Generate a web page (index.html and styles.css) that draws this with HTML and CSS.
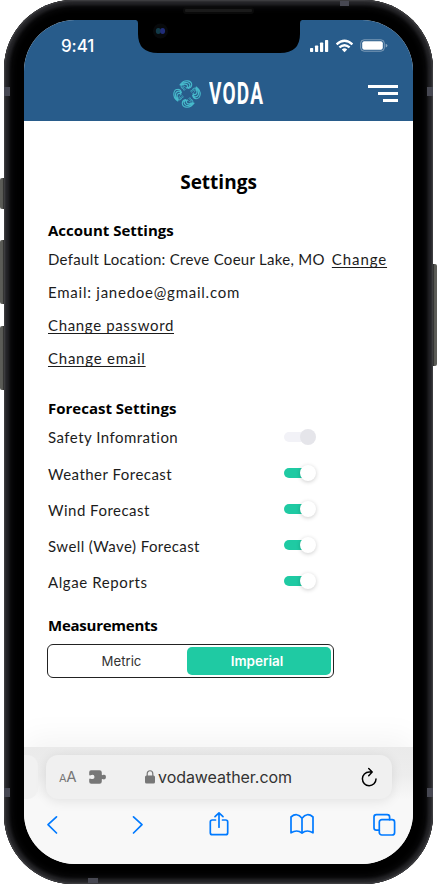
FILE: index.html
```html
<!DOCTYPE html>
<html lang="en">
<head>
<meta charset="utf-8">
<title>Voda Settings</title>
<link rel="stylesheet" href="styles.css">
</head>
<body>
<div class="phone">
  <i class="key key-mute"></i><i class="key key-up"></i><i class="key key-down"></i><i class="key key-power"></i>
  <i class="band band-lt"></i><i class="band band-rt"></i><i class="band band-lb"></i><i class="band band-rb"></i><i class="band band-top"></i><i class="band band-bottom"></i>
  <i class="speaker"></i>
  <div class="screen">
    <svg class="notch" width="166" height="34" viewBox="0 0 166 34"><path d="M0 0Q2 .4 2 3V14Q2 33 22 33H144Q164 33 164 14V3Q164 .4 166 0Z"/><circle cx="24.5" cy="11" r="7.5" fill="#07090b"/><ellipse cx="22.3" cy="11" rx="2.5" ry="3" fill="#123a48"/><ellipse cx="26.6" cy="11" rx="2.5" ry="3" fill="#202c78"/></svg>
    <header class="header">
      <div class="status">
        <span class="time">9:41</span>
        <svg class="signals" width="80" height="14" viewBox="0 0 80 14" fill="#fff">
          <rect x="0" y="9" width="3.2" height="4" rx=".7"/><rect x="5" y="6.5" width="3.2" height="6.5" rx=".7"/><rect x="10" y="3.5" width="3.2" height="9.5" rx=".7"/><rect x="15" y="1" width="3.2" height="12" rx=".7"/>
          <g fill="none" stroke="#fff" stroke-width="2.3"><path d="M26.6 5.3Q34.5-1.9 42.4 5.3M29.4 8.4Q34.5 4 39.6 8.4"/></g><path d="M31.8 10.4Q34.5 8.2 37.2 10.4L34.5 13.2Z"/>
          <rect x="50.7" y=".8" width="23.6" height="11.4" rx="3.4" fill="none" stroke="#fff" stroke-opacity=".4"/><rect x="52.2" y="2.2" width="20.6" height="8.6" rx="2"/><path d="M75.7 4.7Q77.4 5.2 77.4 6.6T75.7 8.5Z" opacity=".45"/>
        </svg>
      </div>
      <div class="brand">
        <svg width="30" height="30" viewBox="-15 -15 30 30" fill="none" stroke="#46b9cb" stroke-width="1.15" stroke-linecap="round">
          <defs><g id="wave"><path d="M-7-9.2Q-3.6-13.9 1-13.1Q4.6-12.4 4.7-9.2M-6.3-8.9Q-3-12.5 1-11.2Q3-10.2 2.9-8M-5.6-8.7Q-2-10.9 0-9.2Q1-8 .3-7M4.7-9.2Q4.5-6.2 1.4-5.6M2.9-8Q1.8-5.8-.6-6.1"/><path d="M-6-7.6Q-3-9-1-6.2M-5.5-6.6Q-3.5-7-2-4.6M-4.8-5.6Q-3.6-5.5-3-3.8" stroke-width="1" stroke-dasharray=".7 1.2"/></g></defs>
          <use href="#wave"/><use href="#wave" transform="rotate(90)"/><use href="#wave" transform="rotate(180)"/><use href="#wave" transform="rotate(270)"/>
        </svg>
        <span class="wordmark">VODA</span>
        <div class="menu"><i></i><i></i><i></i></div>
      </div>
    </header>
    <main class="content">
      <h1>Settings</h1>
      <h2 class="account">Account Settings</h2>
      <div class="line"><span class="location">Default Location: Creve Coeur Lake, MO</span><a class="inline-link">Change</a></div>
      <div class="line"><span>Email: janedoe@gmail.com</span></div>
      <div class="line"><a class="password">Change password</a></div>
      <div class="line"><a>Change email</a></div>
      <h2>Forecast Settings</h2>
      <div class="option first"><span>Safety Infomration</span><i class="switch off"></i></div>
      <div class="option"><span>Weather Forecast</span><i class="switch"></i></div>
      <div class="option"><span>Wind Forecast</span><i class="switch"></i></div>
      <div class="option swell"><span>Swell (Wave) Forecast</span><i class="switch"></i></div>
      <div class="option algae"><span>Algae Reports</span><i class="switch"></i></div>
      <h2 class="measurements">Measurements</h2>
      <div class="segments"><span>Metric</span><span class="selected">Imperial</span></div>
    </main>
    <footer class="browser">
      <div class="tabs"><i class="previous"></i>
        <div class="address">
          <span class="aa"><small>A</small>A</span>
          <svg class="puzzle" width="18" height="14" viewBox="0 0 18 14"><path fill="#777" d="M2 .2H10.5Q12.8.2 12.8 2.5V4.8Q14 5.5 14.2 4.8Q17 4.2 17 7T14.2 9.3Q14 8.6 12.8 9.2V11.5Q12.8 13.8 10.5 13.8H2.3Q.2 13.8.2 11.7V9.2Q.5 8.3 1.5 8.7Q5.5 10 5.5 7T1.5 5.2Q.5 5.7.2 4.8V2.3Q.2.2 2 .2Z"/></svg>
          <svg class="lock" width="10" height="14" viewBox="0 0 10 14"><rect y="5.6" width="10" height="8" rx="1.5" fill="#777"/><path d="M2.2 6V3.8C2.2-.3 7.8-.3 7.8 3.8V6" fill="none" stroke="#777" stroke-width="1.2"/></svg>
          <span class="url">vodaweather.com</span>
          <svg class="reload" width="18" height="20" viewBox="0 0 18 20" fill="none" stroke="#000" stroke-width="1.5" stroke-linecap="round" stroke-linejoin="round"><path d="M12 5.1H9.2A6.8 6.8 0 1 0 16 12M8.7 1.5L12.2 5.1L8.7 8.7"/></svg>
        </div>
      </div>
      <div class="actions">
        <svg width="12" height="26" viewBox="0 0 12 26"><path d="M10.5 4.8L2 12.7L10.5 21"/></svg>
        <svg class="forward" width="12" height="26" viewBox="0 0 12 26"><path d="M1.5 4.8L10 12.7L1.5 21"/></svg>
        <svg class="share" width="20" height="26" viewBox="0 0 20 26"><path d="M6.5 8H3.3Q1.3 8 1.3 10V20.7Q1.3 22.7 3.3 22.7H16.7Q18.7 22.7 18.7 20.7V10Q18.7 8 16.7 8H13.5M10 15.2V1M6 4.6L10 .9L14 4.6"/></svg>
        <svg class="book" width="24" height="26" viewBox="0 0 24 26"><path d="M12 6.2Q7-.1 1 5V20.8Q7.2 17 12 21.2Q16.8 17 23 20.8V5Q17-.1 12 6.2V21"/></svg>
        <svg class="pages" width="24" height="26" viewBox="0 0 24 26"><rect x="6.3" y="7.7" width="15.3" height="15.3" rx="2.5"/><path d="M6.3 18.2H3.4Q1 18.2 1 15.8V5Q1 2.6 3.4 2.6H14.2Q16.6 2.6 16.6 5V7.7"/></svg>
      </div>
    </footer>
  </div>
</div>
</body>
</html>
```
FILE: styles.css
```css
* { box-sizing: border-box; }
body { margin: 0; background: #fff; color: #000; }
i { display: block; font-style: normal; }
.phone { position: relative; width: 429px; height: 884px; margin: 0 4px; padding: 20px; border-radius: 69px; background: #000; box-shadow: inset 0 0 2px 1px #464649, inset 0 0 3px 5px #252528, inset 0 0 7px 7px #101012; }
.screen { position: relative; display: flex; flex-direction: column; width: 389px; height: 844px; overflow: hidden; border-radius: 51px; background: #fff; }
.key { position: absolute; width: 4px; left: -4px; border-radius: 2px 0 0 2px; background: linear-gradient(90deg, #5b5c57 60%, #222); }
.key-mute { top: 178px; height: 31px; }
.key-up { top: 240px; height: 64px; }
.key-down { top: 326px; height: 64px; }
.key-power { left: 429px; top: 264px; height: 102px; border-radius: 0 2px 2px 0; background: linear-gradient(270deg, #5b5c57 60%, #222); }
.band { position: absolute; width: 6px; height: 9px; background: #474852; }
.band-lt { left: 0; top: 87px; }
.band-rt { right: 0; top: 87px; }
.band-lb { left: 0; bottom: 87px; }
.band-rb { right: 0; bottom: 87px; }
.band-top { width: 9px; height: 5px; left: 336px; top: 1px; }
.band-bottom { width: 10px; height: 5px; left: 84px; bottom: 1px; }
.speaker { position: absolute; left: 179px; top: 7px; width: 71px; height: 7px; border: 2px solid #0a0a0a; border-radius: 3px; background: #1a1a1a; }
.notch { position: absolute; z-index: 2; left: 112px; top: 0; }
.header { flex: none; height: 101px; background: #285c8b; color: #fff; }
.status { display: flex; height: 52px; padding: 15px 21px 0 37px; justify-content: space-between; }
.time { font: 500 17px/22px Inter, sans-serif; letter-spacing: -.1px; }
.signals { margin: 4px 2px 0 0; }
.brand { display: flex; align-items: center; height: 43px; padding: 0 15px 0 148px; }
.wordmark { width: 56px; margin: -2px 0 0 7px; font: 700 32px/32px Roboto, sans-serif; letter-spacing: 2px; transform: scaleX(.595); transform-origin: left; }
.menu { display: flex; flex-direction: column; align-items: flex-end; gap: 4px; margin-left: auto; }
.menu i { width: 30px; height: 3px; background: #fff; }
.menu i + i { width: 20px; }
.menu i + i + i { width: 15px; }
.content { height: 626px; padding: 47px 24px 0; font: 400 15px/20px Lato, sans-serif; }
h1, h2 { margin: 0; font-family: "Open Sans", sans-serif; font-weight: 700; }
h1 { font-size: 19px; line-height: 28px; text-align: center; }
h2 { margin-top: 23px; font-size: 15px; line-height: 22px; }
.account { margin-bottom: 1px; }
.line { display: flex; align-items: center; height: 33px; color: #1c1c1c; letter-spacing: .76px; white-space: nowrap; }
.line .location { letter-spacing: .29px; }
.line .password { letter-spacing: .65px; }
.line a { text-decoration: underline; text-decoration-thickness: 1px; text-underline-offset: 2px; text-decoration-skip-ink: none; }
.line .inline-link { margin-left: 7px; letter-spacing: .9px; }
.option { display: flex; align-items: center; justify-content: space-between; width: 268px; height: 36px; color: #1c1c1c; letter-spacing: .48px; }
.option span { padding-top: 1px; }
.option.first span { padding: 0; }
.swell { letter-spacing: .41px; }
.algae { letter-spacing: .6px; }
.switch { position: relative; width: 32px; height: 16px; }
.switch::before { content: ""; position: absolute; left: 0; top: 3px; width: 30px; height: 10px; border-radius: 5px; background: #1fcaa3; }
.switch::after { content: ""; position: absolute; right: 0; top: 0; width: 16px; height: 16px; border-radius: 50%; background: #fff; box-shadow: 0 1px 4px #0003; }
.off::before { background: #f2f2f7; }
.off::after { background: #e5e5ea; box-shadow: none; }
.measurements { margin-top: 15px; letter-spacing: -.25px; }
.segments { display: flex; width: 287px; height: 34px; margin: 8px 0 0 -1px; padding: 2px; border: 1px solid #222; border-radius: 6px; font: 400 13.2px/28px Inter, sans-serif; text-align: center; color: #333; }
.segments span { flex: 1; padding-left: 6px; }
.segments .selected { flex: 0 0 144px; padding: 0 4px 0 0; border-radius: 5px; background: #1fcaa3; color: #fff; font-size: 13.5px; font-weight: 600; }
.browser { flex: 1; background: #f8f8f8; box-shadow: 0 -8px 30px #0000000d; }
.tabs { display: flex; gap: 8px; padding-top: 8px; background: linear-gradient(#eaeaea, #ededed 55%, #f8f8f8); }
.previous { width: 14px; height: 44px; border-radius: 0 11px 11px 0; background: #f1f1f1; }
.address { display: flex; align-items: center; width: 346px; height: 44px; padding: 0 14px 0 13px; border-radius: 12px; background: #f0f0f0; box-shadow: 0 2px 12px #00000018; }
.aa { width: 18px; font: 400 15px/20px Inter, sans-serif; letter-spacing: -.3px; color: #777; white-space: nowrap; }
.aa small { font-size: 11px; }
.puzzle { margin-left: 12px; }
.lock { margin: 0 3px 0 38px; }
.url { font: 400 16px/24px Inter, sans-serif; color: #333; letter-spacing: -.05px; }
.reload { margin-left: auto; }
.actions { display: flex; height: 50px; padding: 13px 0 0 22px; fill: none; stroke: #007aff; stroke-width: 1.7; stroke-linecap: round; stroke-linejoin: round; }
.actions svg { overflow: visible; }
.forward { margin-left: 74px; }
.share { margin-left: 65px; }
.book { margin-left: 61px; }
.pages { margin-left: 59px; }
```
